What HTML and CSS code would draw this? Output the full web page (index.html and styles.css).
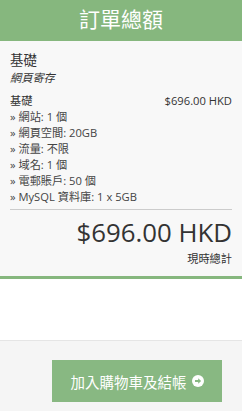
FILE: index.html
```html
<!DOCTYPE html>
<html lang="zh-Hant">
<head>
<meta charset="utf-8">
<title>訂單總額</title>
<link rel="stylesheet" href="styles.css">
</head>
<body>
<div class="page">
  <div class="summary">
    <h2 class="summary-title">訂單總額</h2>
    <div class="summary-body">
      <div class="product-name">基礎</div>
      <div class="product-group">網頁寄存</div>
      <div class="line-row">
        <span>基礎</span>
        <span>$696.00 HKD</span>
      </div>
      <div class="features">
        » 網站: 1 個<br>
        » 網頁空間: 20GB<br>
        » 流量: 不限<br>
        » 域名: 1 個<br>
        » 電郵賬戶: 50 個<br>
        » MySQL 資料庫: 1 x 5GB
      </div>
      <div class="divider"></div>
      <div class="total">
        <span class="amount">$696.00 HKD</span>
        <span class="total-label">現時總計</span>
      </div>
    </div>
  </div>
  <div class="spacer"></div>
  <div class="actions">
    <a class="checkout-btn" href="#">加入購物車及結帳
      <svg class="btn-icon" viewBox="0 0 12 12" width="12" height="12" aria-hidden="true">
        <circle cx="6" cy="6" r="6" fill="#fff"/>
        <path d="M3 5.1h3.2V3.2L9.1 6 6.2 8.8V6.9H3z" fill="#88b882"/>
      </svg>
    </a>
  </div>
</div>
</body>
</html>
```
FILE: styles.css
```css
html, body {
  margin: 0;
  padding: 0;
  background: #ffffff;
}

body {
  font-family: "Open Sans", "Noto Sans CJK TC", sans-serif;
  color: #333333;
}

.page {
  width: 242px;
}

.summary {
  background: #f8f8f8;
  border-bottom: 3px solid #86b77e;
}

.summary-title {
  margin: 0;
  height: 41px;
  box-sizing: border-box;
  padding-top: 7px;
  background: #86b77e;
  color: #ffffff;
  font-weight: normal;
  font-size: 21px;
  line-height: 24px;
  text-align: center;
}

.summary-body {
  padding: 10px 10px 9px 10px;
  font-size: 11.2px;
  line-height: 16px;
}

.product-name {
  font-size: 13.4px;
  line-height: 19px;
  color: #333333;
}

.product-group {
  font-style: italic;
  color: #333333;
  margin-bottom: 7px;
}

.line-row {
  display: flex;
  justify-content: space-between;
}

.features {
  color: #444444;
}

.divider {
  margin-top: 4px;
  border-top: 1px solid #cccccc;
}

.total {
  display: flex;
  flex-direction: column;
  align-items: flex-end;
  padding-top: 4px;
}

.amount {
  font-size: 25.8px;
  line-height: 37px;
  color: #333333;
}

.total-label {
  color: #333333;
}

.spacer {
  height: 61px;
  background: #ffffff;
}

.actions {
  background: #f5f5f5;
  border-top: 1px solid #e5e5e5;
  display: flex;
  justify-content: flex-end;
  padding: 19px 20px 20px 0;
}

.checkout-btn {
  display: inline-flex;
  align-items: center;
  gap: 5px;
  width: 170px;
  height: 42px;
  justify-content: center;
  box-sizing: border-box;
  background: #88b882;
  color: #ffffff;
  text-decoration: none;
  font-size: 14.5px;
}

.btn-icon {
  display: block;
}
```
